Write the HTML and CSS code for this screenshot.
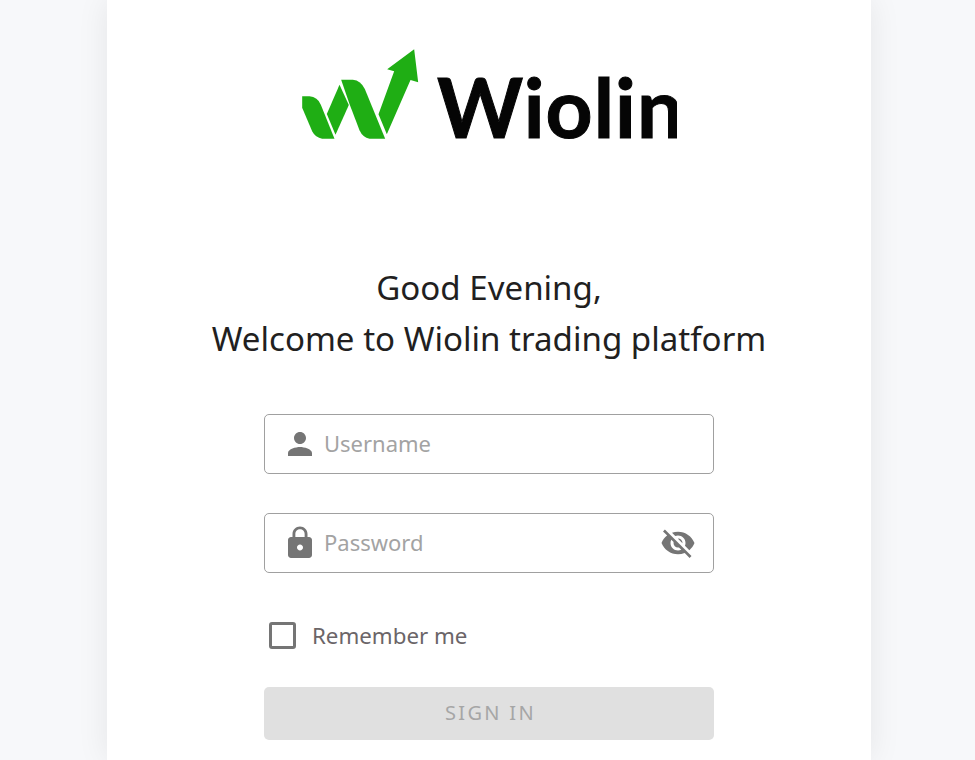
FILE: index.html
```html
<!DOCTYPE html>
<html lang="en">
<head>
    <meta charset="UTF-8">
    <meta name="viewport" content="width=device-width, initial-scale=1.0">
    <title>Wiolin</title>
    <link rel="stylesheet" href="styles.css">
</head>
<body>
    <div class="card">
        <div class="logo">
            <svg class="logo-mark" viewBox="36 40 350 270" aria-hidden="true">
                <path d="M36 182 L58 182 Q82 184 92 207 L133 309 L96 309 Q76 307 66 287 L36 216 Z"/>
                <path d="M148 147 L176 208 L136 297 L110 235 Z"/>
                <path d="M153 132 L188 132 Q212 134 224 160 L285 309 L238 309 Q218 306 208 284 L178 205 Z"/>
                <path d="M265 236 L312 107 L291 101 L372 41 L384 140 L361 133 L290 296 Z"/>
            </svg>
            <div class="logo-text">Wiolin</div>
        </div>

        <h1 class="greeting">Good Evening,<br>Welcome to Wiolin trading platform</h1>

        <form class="login-form">
            <div class="field">
                <svg class="icon" viewBox="0 0 24 24" aria-hidden="true">
                    <path d="M12 12c2.21 0 4-1.79 4-4s-1.79-4-4-4-4 1.79-4 4 1.79 4 4 4zm0 2c-2.67 0-8 1.34-8 4v2h16v-2c0-2.66-5.33-4-8-4z"/>
                </svg>
                <input type="text" placeholder="Username">
            </div>
            <div class="field">
                <svg class="icon" viewBox="0 0 24 24" aria-hidden="true">
                    <path d="M18 8h-1V6c0-2.76-2.24-5-5-5S7 3.24 7 6v2H6c-1.1 0-2 .9-2 2v10c0 1.1.9 2 2 2h12c1.1 0 2-.9 2-2V10c0-1.1-.9-2-2-2zm-6 9c-1.1 0-2-.9-2-2s.9-2 2-2 2 .9 2 2-.9 2-2 2zm3.1-9H8.9V6c0-1.71 1.39-3.1 3.1-3.1 1.71 0 3.1 1.39 3.1 3.1v2z"/>
                </svg>
                <input type="password" placeholder="Password">
                <svg class="icon" viewBox="0 0 24 24" aria-hidden="true">
                    <path d="M12 7c2.76 0 5 2.24 5 5 0 .65-.13 1.26-.36 1.83l2.92 2.92c1.51-1.26 2.7-2.89 3.43-4.75-1.73-4.39-6-7.5-11-7.5-1.4 0-2.74.25-3.98.7l2.16 2.16C10.74 7.13 11.35 7 12 7zM2 4.27l2.28 2.28.46.46C3.08 8.3 1.78 10.02 1 12c1.73 4.39 6 7.5 11 7.5 1.55 0 3.03-.3 4.38-.84l.42.42L19.73 22 21 20.73 3.27 3 2 4.27zM7.53 9.8l1.55 1.55c-.05.21-.08.43-.08.65 0 1.66 1.34 3 3 3 .22 0 .44-.03.65-.08l1.55 1.55c-.67.33-1.41.53-2.2.53-2.76 0-5-2.24-5-5 0-.79.2-1.53.53-2.2zm4.31-.78l3.15 3.15.02-.16c0-1.66-1.34-3-3-3l-.17.01z"/>
                </svg>
            </div>
            <label class="remember">
                <span class="checkbox"></span>
                Remember me
            </label>
            <button class="btn-signin" type="button" disabled>SIGN IN</button>
        </form>
    </div>
</body>
</html>
```

FILE: styles.css
```css
html {
    height: 100%;
    overflow: hidden;
}
body {
    font-family: "Noto Sans", Arial, sans-serif;
    margin: 0;
    height: 100%;
    background-color: #f7f8fa;
}
.card {
    width: 764px;
    height: 100%;
    margin-left: 107px;
    padding-top: 48px;
    box-sizing: border-box;
    background-color: #fff;
    box-shadow: 0 0 30px rgba(0, 0, 0, 0.08);
}
.logo {
    display: flex;
    align-items: flex-end;
    width: 375px;
    height: 91px;
    margin-left: 195px;
    overflow: hidden;
}
.logo-mark {
    width: 117px;
    height: 90px;
    margin-right: 18px;
    flex-shrink: 0;
    fill: #1fae14;
}
.logo-text {
    font-family: "Lato", sans-serif;
    font-weight: 700;
    font-size: 82px;
    line-height: 65px;
    letter-spacing: 1px;
    -webkit-text-stroke: 1px #050505;
    color: #050505;
    white-space: nowrap;
}
.greeting {
    margin: 123px 0 50px;
    font-size: 33.1px;
    font-weight: 400;
    line-height: 51px;
    text-align: center;
    color: #221f1f;
}
.login-form {
    width: 450px;
    margin-left: 157px;
}
.field {
    display: flex;
    align-items: center;
    gap: 6px;
    height: 60px;
    padding: 0 17px;
    margin-bottom: 39px;
    box-sizing: border-box;
    border: 1px solid #a0a0a0;
    border-radius: 5px;
}
.field input {
    flex: 1;
    min-width: 0;
    padding: 0 0 2px;
    border: none;
    outline: none;
    font-family: inherit;
    font-size: 22px;
    color: #333;
}
.field input::placeholder {
    color: #a3a3a3;
}
.icon {
    width: 36px;
    height: 36px;
    flex-shrink: 0;
    fill: #757575;
}
.remember {
    display: flex;
    align-items: center;
    gap: 16px;
    margin: 48px 0 38px 5px;
    height: 28px;
    font-size: 22.3px;
    color: #6b6568;
}
.checkbox {
    width: 21px;
    height: 21px;
    border: 3px solid #757575;
    border-radius: 3px;
}
.btn-signin {
    display: block;
    width: 100%;
    height: 53px;
    padding: 0 0 2px 3px;
    border: none;
    border-radius: 5px;
    background-color: #e0e0e0;
    color: #a6a6a6;
    font-family: inherit;
    font-size: 20px;
    letter-spacing: 2.3px;
}
```
